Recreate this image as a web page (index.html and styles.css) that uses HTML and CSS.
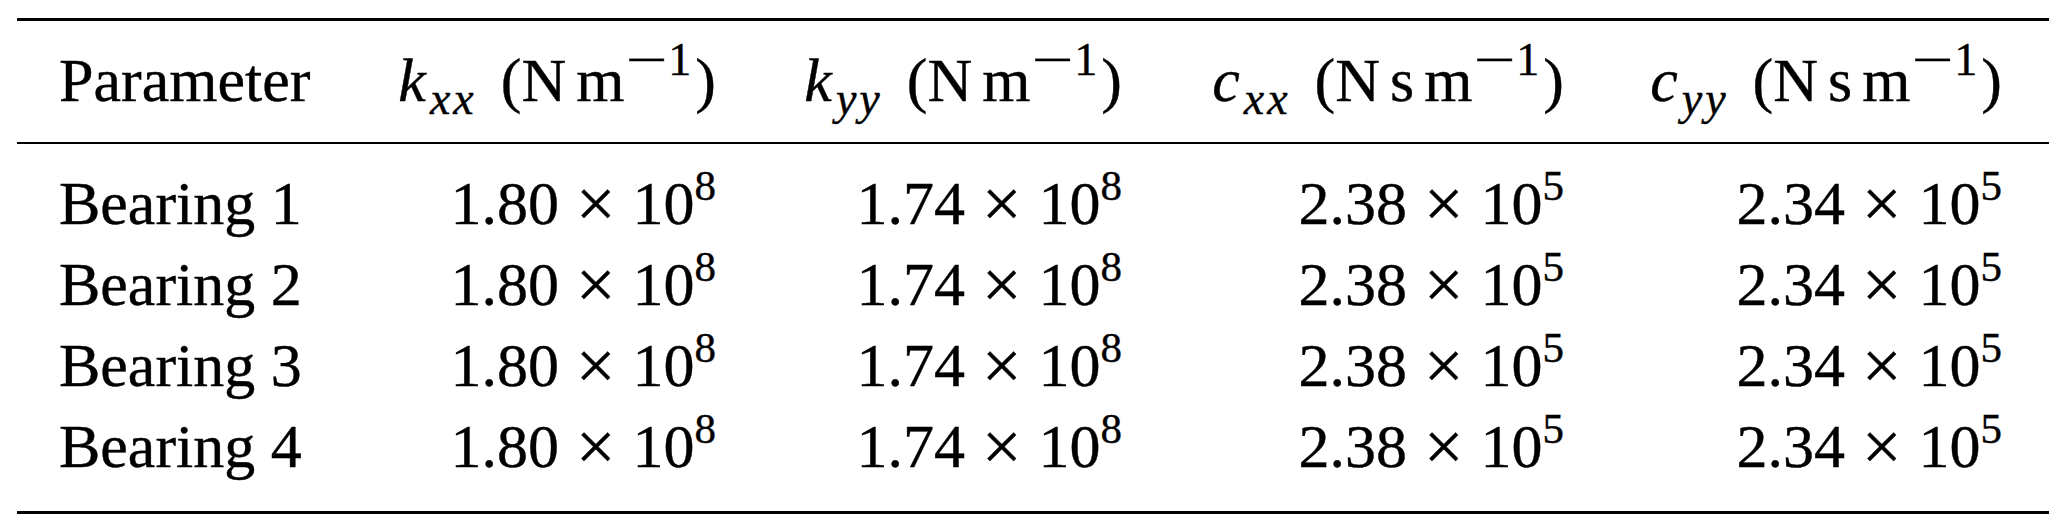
FILE: index.html
```html
<!DOCTYPE html>
<html lang="en">
<head>
<meta charset="utf-8">
<title>Bearing parameters</title>
<link rel="stylesheet" href="styles.css">
</head>
<body>
<div class="table">
  <div class="row head">
    <div class="cell label">Parameter</div>
    <div class="cell num"><span class="mi">k</span><span class="sub">xx</span><span class="sp"></span>(N<span class="thin"></span>m<span class="sup hsup"><span class="minus">−</span>1</span>)</div>
    <div class="cell num"><span class="mi">k</span><span class="sub">yy</span><span class="sp"></span>(N<span class="thin"></span>m<span class="sup hsup"><span class="minus">−</span>1</span>)</div>
    <div class="cell num"><span class="mi">c</span><span class="sub">xx</span><span class="sp"></span>(N<span class="thin"></span>s<span class="thin"></span>m<span class="sup hsup"><span class="minus">−</span>1</span>)</div>
    <div class="cell num"><span class="mi">c</span><span class="sub">yy</span><span class="sp"></span>(N<span class="thin"></span>s<span class="thin"></span>m<span class="sup hsup"><span class="minus">−</span>1</span>)</div>
  </div>
  <div class="tbody">
    <div class="row">
      <div class="cell label">Bearing 1</div>
      <div class="cell num">1.80<span class="op">×</span>10<span class="sup">8</span></div>
      <div class="cell num">1.74<span class="op">×</span>10<span class="sup">8</span></div>
      <div class="cell num">2.38<span class="op">×</span>10<span class="sup">5</span></div>
      <div class="cell num">2.34<span class="op">×</span>10<span class="sup">5</span></div>
    </div>
    <div class="row">
      <div class="cell label">Bearing 2</div>
      <div class="cell num">1.80<span class="op">×</span>10<span class="sup">8</span></div>
      <div class="cell num">1.74<span class="op">×</span>10<span class="sup">8</span></div>
      <div class="cell num">2.38<span class="op">×</span>10<span class="sup">5</span></div>
      <div class="cell num">2.34<span class="op">×</span>10<span class="sup">5</span></div>
    </div>
    <div class="row">
      <div class="cell label">Bearing 3</div>
      <div class="cell num">1.80<span class="op">×</span>10<span class="sup">8</span></div>
      <div class="cell num">1.74<span class="op">×</span>10<span class="sup">8</span></div>
      <div class="cell num">2.38<span class="op">×</span>10<span class="sup">5</span></div>
      <div class="cell num">2.34<span class="op">×</span>10<span class="sup">5</span></div>
    </div>
    <div class="row">
      <div class="cell label">Bearing 4</div>
      <div class="cell num">1.80<span class="op">×</span>10<span class="sup">8</span></div>
      <div class="cell num">1.74<span class="op">×</span>10<span class="sup">8</span></div>
      <div class="cell num">2.38<span class="op">×</span>10<span class="sup">5</span></div>
      <div class="cell num">2.34<span class="op">×</span>10<span class="sup">5</span></div>
    </div>
  </div>
</div>
</body>
</html>
```
FILE: styles.css
```css
html, body {
  margin: 0;
  padding: 0;
  background: #ffffff;
}

body {
  font-family: "Liberation Serif", "Times New Roman", serif;
  font-size: 62px;
  color: #000000;
  -webkit-text-stroke: 0.4px #000000;
}

.table {
  margin: 18px 0 0 17px;
  width: 2032px;
  border-top: 3px solid #000000;
  border-bottom: 3px solid #000000;
}

.row {
  display: grid;
  grid-template-columns: 271px 386px 406px 442px 438px;
  padding: 0 47px 0 42px;
  line-height: 81px;
}

.head {
  padding-top: 19px;
  padding-bottom: 21px;
  border-bottom: 2px solid #000000;
}

.tbody {
  padding-top: 19px;
  padding-bottom: 24px;
}

.cell {
  white-space: nowrap;
}

.label {
  text-align: left;
}

.num {
  text-align: right;
}

.mi {
  font-style: italic;
  margin-right: 4px;
}

.sub {
  font-style: italic;
  font-size: 46px;
  letter-spacing: 3px;
  line-height: 0;
  vertical-align: -13px;
}

.sup {
  font-size: 43px;
  line-height: 0;
  vertical-align: 24px;
}

.hsup {
  font-size: 46px;
  vertical-align: 26px;
  margin-left: 3px;
  margin-right: 4px;
}

.minus {
  display: inline-block;
  transform: scaleX(1.6);
  margin: 0 8px 0 7px;
}

.sp {
  display: inline-block;
  width: 24px;
}

.thin {
  display: inline-block;
  width: 10px;
}

.op {
  font-size: 70px;
  line-height: 0;
  vertical-align: -3px;
  margin: 0 17px;
}
```
